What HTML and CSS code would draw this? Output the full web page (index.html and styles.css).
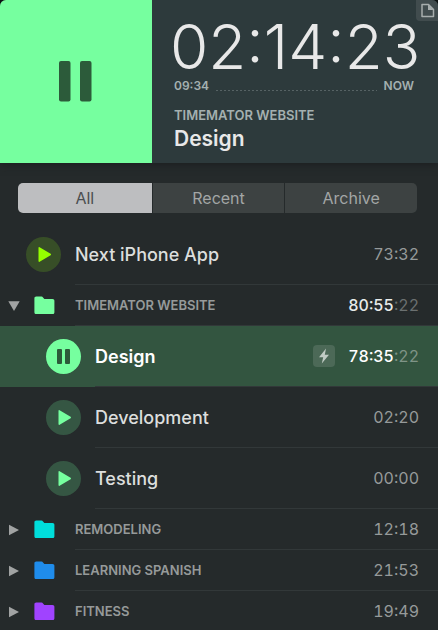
FILE: index.html
```html
<!DOCTYPE html>
<html lang="en">
<head>
<meta charset="utf-8">
<meta name="viewport" content="width=device-width, initial-scale=1">
<title>Timemator</title>
<link rel="stylesheet" href="styles.css">
</head>
<body>
<svg class="defs" aria-hidden="true">
  <symbol id="play" viewBox="0 0 35 35"><path d="M12.500 10.900v13.200q0 1.200 1.100.6l11-6.500q.9-.7 0-1.400l-11-6.500q-1.100-.6-1.100.6z"/></symbol>
  <symbol id="folder" viewBox="0 0 21 19"><path d="M2.300.6h5.200c.7 0 1.100.3 1.500.8l.9 1.200c.3.4.6.5 1.100.5h7.500c1.200 0 1.900.7 1.900 1.900v11.200c0 1.200-.7 1.900-1.900 1.900H2.300c-1.200 0-1.900-.7-1.900-1.900V2.500C.4 1.300 1.100.6 2.300.6z"/></symbol>
  <symbol id="closed" viewBox="0 0 12 12"><path d="M1 .8l10 5.200-10 5.200z"/></symbol>
  <symbol id="open" viewBox="0 0 12 12"><path d="M.3 1.200h11.400L6 11z"/></symbol>
</svg>
<main class="app">
  <header class="timer">
    <button class="stop" aria-label="Pause timer">
      <svg width="34" height="42" viewBox="0 0 34 42"><rect x="0" y="0" width="11.500" height="40.500" rx="2"/><rect x="21" y="0" width="11.500" height="40.500" rx="2"/></svg>
    </button>
    <div class="session">
      <button class="note" aria-label="Add note">
        <svg width="15" height="15" viewBox="0 0 15 15"><path d="M2 1.500h6.500l5 5v7H2z" fill="none" stroke="currentColor" stroke-width="1.500" stroke-linejoin="round"/><path d="M8 1.500v5.500h5.500z" fill="currentColor"/></svg>
      </button>
      <div class="clock">02:14:23</div>
      <div class="range"><span>09:34</span><i class="dots"></i><span>NOW</span></div>
      <div class="project">TIMEMATOR WEBSITE</div>
      <h1 class="task">Design</h1>
    </div>
  </header>
  <nav class="tabs" aria-label="Filter">
    <button class="tab selected" aria-pressed="true">All</button>
    <button class="tab" aria-pressed="false">Recent</button>
    <button class="tab" aria-pressed="false">Archive</button>
  </nav>
  <ul class="list">
    <li class="row top lime">
      <button class="round" aria-label="Start Next iPhone App"><svg><use href="#play"/></svg></button>
      <div class="line"><span class="name">Next iPhone App</span><span class="time">73:32</span></div>
    </li>
    <li class="row group green">
      <button class="toggle" aria-label="Collapse Timemator Website"><svg><use href="#open"/></svg></button>
      <svg class="folder"><use href="#folder"/></svg>
      <div class="line"><span class="title">TIMEMATOR WEBSITE</span><span class="time live">80:55<small>:22</small></span></div>
    </li>
    <li class="row child active">
      <button class="round" aria-label="Pause Design"><svg viewBox="0 0 35 35"><rect x="11" y="10" width="5" height="15" rx="1"/><rect x="19" y="10" width="5" height="15" rx="1"/></svg></button>
      <div class="line"><span class="name">Design</span>
        <span class="auto"><svg width="22" height="22" viewBox="0 0 22 22"><path d="M13 3.500L6 12.200h4.200L8.800 18.500 16 9.800h-4.200z"/></svg></span>
        <span class="time live">78:35<small>:22</small></span></div>
    </li>
    <li class="row child green">
      <button class="round" aria-label="Start Development"><svg><use href="#play"/></svg></button>
      <div class="line"><span class="name">Development</span><span class="time">02:20</span></div>
    </li>
    <li class="row child green">
      <button class="round" aria-label="Start Testing"><svg><use href="#play"/></svg></button>
      <div class="line"><span class="name">Testing</span><span class="time">00:00</span></div>
    </li>
    <li class="row group cyan">
      <button class="toggle" aria-label="Expand Remodeling"><svg><use href="#closed"/></svg></button>
      <svg class="folder"><use href="#folder"/></svg>
      <div class="line"><span class="title">REMODELING</span><span class="time">12:18</span></div>
    </li>
    <li class="row group blue">
      <button class="toggle" aria-label="Expand Learning Spanish"><svg><use href="#closed"/></svg></button>
      <svg class="folder"><use href="#folder"/></svg>
      <div class="line"><span class="title">LEARNING SPANISH</span><span class="time">21:53</span></div>
    </li>
    <li class="row group purple">
      <button class="toggle" aria-label="Expand Fitness"><svg><use href="#closed"/></svg></button>
      <svg class="folder"><use href="#folder"/></svg>
      <div class="line"><span class="title">FITNESS</span><span class="time">19:49</span></div>
    </li>
  </ul>
</main>
</body>
</html>
```

FILE: styles.css
```css
* { box-sizing: border-box; }
html { background: #0b1011; }
body {
  margin: 0;
  font-family: Inter, "Liberation Sans", sans-serif;
  color: #dcdedd;
}
button {
  margin: 0;
  padding: 0;
  border: 0;
  background: none;
  font: inherit;
  color: inherit;
}
svg { display: block; fill: currentColor; }
.defs { position: absolute; width: 0; height: 0; }
.app {
  min-height: 100vh;
  overflow: hidden;
  background: #252a2b;
  border-radius: 6px 6px 0 0;
}

.timer {
  display: flex;
  height: 163px;
  background: #2d3a3c;
  box-shadow: 0 1px 8px #1a1d1e;
}
.stop {
  flex: none;
  display: grid;
  place-items: center;
  width: 152px;
  background: #76ff9f;
  color: #2c5b3a;
}
.session {
  position: relative;
  flex: 1;
  min-width: 0;
  padding: 15px 18px 0 22px;
}
.note {
  position: absolute;
  top: 0;
  right: 0;
  display: grid;
  place-items: center;
  width: 22px;
  height: 21px;
  background: #414c4e;
  border-radius: 0 0 0 4px;
  color: #a7adad;
}
.clock {
  margin-left: -4px;
  font-size: 62px;
  line-height: 63px;
  font-weight: 300;
  color: #e8e8e8;
  white-space: nowrap;
}
.range {
  display: flex;
  align-items: center;
  gap: 7px;
  padding-right: 6px;
  font-size: 12px;
  line-height: 16px;
  font-weight: 600;
  color: #a4b0b0;
}
.dots {
  flex: 1;
  height: 1px;
  margin-top: 9px;
  background: repeating-linear-gradient(90deg, #566264 0 2px, transparent 2px 4px);
}
.project {
  margin-top: 12px;
  font-size: 13px;
  line-height: 18px;
  font-weight: 600;
  color: #a4b0b0;
}
.task {
  margin: 0;
  font-size: 21px;
  line-height: 29px;
  font-weight: 600;
  color: #e8e8e8;
}

.tabs {
  display: flex;
  gap: 1px;
  margin: 20px 21px 0 18px;
  border-radius: 5px;
  overflow: hidden;
}
.tab {
  flex: 1;
  height: 30px;
  background: #3d4242;
  color: #a3a6a6;
  font-size: 16px;
}
.tab.selected { flex: 1 0 2px; background: #bdbec0; color: #4b4e4f; }

.list { margin: 11px 0 0; padding: 0; list-style: none; max-height: calc(100vh - 224px); overflow: hidden; }
.row { display: flex; align-items: center; height: 61px; }
.top { padding-left: 26px; }
.child { padding-left: 46px; }
.group { height: 41px; padding-left: 8px; }
.line {
  flex: 1;
  align-self: stretch;
  display: flex;
  align-items: center;
  margin-left: 14px;
  padding-right: 19px;
  border-bottom: 1px solid #323839;
}
.name { flex: 1; font-size: 18px; font-weight: 500; }
.title { flex: 1; font-size: 13px; font-weight: 600; color: #969a9a; }
.time { font-size: 16px; font-variant-numeric: tabular-nums; color: #969a9a; }
.live { color: #e8ebea; font-weight: 500; }
.live small { font-size: inherit; font-weight: 400; color: #6b7070; }

.round {
  flex: none;
  width: 35px;
  height: 35px;
  border-radius: 50%;
}
.round svg { width: 35px; height: 35px; }
.toggle svg { width: 12px; height: 12px; color: #a1a3a3; }
.folder { width: 21px; height: 19px; margin-left: 14px; }
.group .line { margin-left: 20px; }

.lime .round { background: #374e27; color: #95ff00; }
.green .round { background: #355643; }
.green .round, .green .folder { color: #76ff9f; }
.cyan .folder { color: #00dedb; }
.blue .folder { color: #1f8ceb; }
.purple .folder { color: #a043ff; }

.active { background: #335540; }
.active .round { background: #76ff9f; color: #2c5b3a; }
.active .name { font-weight: 600; color: #fff; }
.active .live { color: #fff; }
.active small { color: #7f9487; }
.auto {
  margin-right: 13px;
  border-radius: 4px;
  background: #4c6957;
  color: #c0cbc4;
}
```
